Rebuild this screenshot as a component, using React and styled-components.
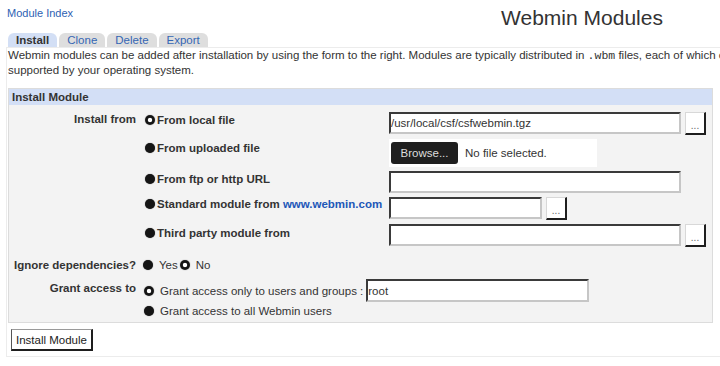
import React from 'react'
import styled, { createGlobalStyle } from 'styled-components'

const GlobalStyle = createGlobalStyle`
  html, body {
    margin: 0;
    padding: 0;
    overflow: hidden;
    background: #fff;
  }
  body {
    font-family: "Liberation Sans", Arial, sans-serif;
    font-size: 11.5px;
    color: #333;
  }
`

const Page = styled.div`
  width: 1152px;
  padding: 0 6px;
`

const Header = styled.div`
  display: grid;
  grid-template-columns: 15% 70% 15%;
  height: 33px;
`

const IndexLink = styled.a`
  align-self: start;
  padding: 6px 0 0 1px;
  font-size: 11px;
  line-height: 14px;
  color: #2d5fb3;
  text-decoration: none;
`

const Title = styled.h1`
  margin: 0;
  padding-top: 7px;
  font-size: 21px;
  line-height: 22px;
  font-weight: normal;
  text-align: center;
  color: #333;
`

const Tabs = styled.div`
  display: flex;
  gap: 2px;
  margin-left: 2px;
`

const Tab = styled.span`
  height: 14px;
  padding: 0 8px;
  border-radius: 6px 6px 0 0;
  line-height: 14px;
  font-weight: ${(p) => (p.$active ? 'bold' : 'normal')};
  color: ${(p) => (p.$active ? '#333' : '#3566b4')};
  background: ${(p) => (p.$active ? '#d3dff5' : '#dedede')};
`

const Panel = styled.div`
  border: 1px solid #ececec;
  padding: 0 1px 5px;
`

const Description = styled.p`
  margin: 0 0 11px;
  line-height: 14px;
`

const Mono = styled.code`
  font-family: "Liberation Mono", "Courier New", monospace;
  font-size: 11.5px;
`

const Box = styled.div`
  width: 705px;
  box-sizing: border-box;
  border: 1px solid #dcdcdc;
`

const BoxHead = styled.div`
  height: 16px;
  padding-left: 3px;
  line-height: 16px;
  font-weight: bold;
  background: #d3dff6;
`

const BoxBody = styled.div`
  padding: 7px 0 4px;
  background: #f3f3f3;
`

const Row = styled.div`
  display: grid;
  grid-template-columns: 134px 1fr;
  margin-top: ${(p) => p.$gap || 0}px;
`

const Label = styled.div`
  padding: ${(p) => p.$top || 0}px 7px 0 0;
  line-height: 14px;
  font-weight: bold;
  text-align: right;
`

const SourceGrid = styled.div`
  display: grid;
  grid-template-columns: 246px auto;
  row-gap: 4px;
`

const Choice = styled.div`
  display: flex;
  align-items: center;
  gap: 2px;
  padding: ${(p) => (p.$top ?? 1)}px 0 0 2px;
  height: 14px;
  line-height: 14px;
  font-weight: bold;
`

const Option = styled.span`
  display: inline-flex;
  align-items: center;
  gap: 6px;
  line-height: 14px;
`

const Options = styled.div`
  display: flex;
  align-items: center;
  gap: 2px;
`

const Stack = styled.div`
  display: flex;
  flex-direction: column;
  gap: 2px;
`

const Line = styled.div`
  display: flex;
  align-items: center;
  gap: 3px;
  padding-left: 1px;
`

const Radio = styled.span`
  flex: none;
  width: 10px;
  height: 10px;
  border-radius: 50%;
  background: ${(p) =>
    p.$checked
      ? 'radial-gradient(circle, #fff 0 1.8px, #151515 2.6px)'
      : '#151515'};
  box-shadow: 0 0 1px rgba(0, 0, 0, 0.6);
`

const WebLink = styled.a`
  color: #2157b8;
  text-decoration: none;
`

const InputCell = styled.div`
  display: flex;
  align-items: flex-start;
  gap: 4px;
`

const TextInput = styled.input`
  box-sizing: border-box;
  width: ${(p) => p.$width}px;
  height: ${(p) => p.$height || 22}px;
  margin: 0;
  padding: 0 1px 0 0;
  border-style: solid;
  border-width: 2px;
  border-color: #3a3a3a #c6c6c6 #c6c6c6 #3a3a3a;
  background: #fff;
  font-family: "Liberation Sans", Arial, sans-serif;
  font-size: 11.5px;
  color: #333;
  outline: none;
`

const DotsButton = styled.button`
  box-sizing: border-box;
  width: 21px;
  height: 23px;
  margin: 0;
  padding: 4px 0 0;
  border-style: solid;
  border-width: 1px 2px 2px 1px;
  border-color: #d8d8d8 #1e1e1e #1e1e1e #d8d8d8;
  background: #fff;
  font-family: "Liberation Sans", Arial, sans-serif;
  font-size: 10px;
  color: #666;
`

const BrowseBox = styled.div`
  display: flex;
  align-items: center;
  gap: 7px;
  width: 208px;
  height: 28px;
  padding-left: 2px;
  box-sizing: border-box;
  background: #fff;
`

const BrowseButton = styled.span`
  width: 67px;
  height: 22px;
  border-radius: 3px;
  background: #1f1f1f;
  color: #ddd;
  line-height: 22px;
  text-align: center;
`

const Actions = styled.div`
  margin: 6px 0 0 3px;
`

const SubmitButton = styled.button`
  box-sizing: border-box;
  width: 82px;
  height: 22px;
  margin: 0;
  padding: 0;
  border-style: solid;
  border-width: 1px 2px 2px 1px;
  border-color: #9a9a9a #1e1e1e #1e1e1e #555;
  background: #fff;
  font-family: "Liberation Sans", Arial, sans-serif;
  font-size: 11.5px;
  color: #222;
`

function App() {
  return (
    <Page>
      <GlobalStyle />
      <Header>
        <IndexLink href="#">Module Index</IndexLink>
        <Title>Webmin Modules</Title>
        <span />
      </Header>
      <Tabs>
        <Tab $active>Install</Tab>
        <Tab>Clone</Tab>
        <Tab>Delete</Tab>
        <Tab>Export</Tab>
      </Tabs>
      <Panel>
        <Description>
          Webmin modules can be added after installation by using the form to
          the right. Modules are typically distributed in <Mono>.wbm</Mono>{' '}
          files, each of which can contain one or more modules. Modules can also
          be installed from RPM files if
          <br />
          supported by your operating system.
        </Description>
        <Box>
          <BoxHead>Install Module</BoxHead>
          <BoxBody>
            <Row>
              <Label>Install from</Label>
              <SourceGrid>
                <Choice>
                  <Radio $checked />
                  From local file
                </Choice>
                <InputCell>
                  <TextInput $width={292} defaultValue="/usr/local/csf/csfwebmin.tgz" />
                  <DotsButton>...</DotsButton>
                </InputCell>

                <Choice $top={2}>
                  <Radio />
                  From uploaded file
                </Choice>
                <BrowseBox>
                  <BrowseButton>Browse...</BrowseButton>
                  <span>No file selected.</span>
                </BrowseBox>

                <Choice>
                  <Radio />
                  From ftp or http URL
                </Choice>
                <InputCell>
                  <TextInput $width={292} />
                </InputCell>

                <Choice $top={0}>
                  <Radio />
                  <span>
                    Standard module from <WebLink href="#">www.webmin.com</WebLink>
                  </span>
                </Choice>
                <InputCell>
                  <TextInput $width={153} />
                  <DotsButton>...</DotsButton>
                </InputCell>

                <Choice $top={2}>
                  <Radio />
                  Third party module from
                </Choice>
                <InputCell>
                  <TextInput $width={292} />
                  <DotsButton>...</DotsButton>
                </InputCell>
              </SourceGrid>
            </Row>

            <Row $gap={11}>
              <Label>Ignore dependencies?</Label>
              <Options>
                <Option>
                  <Radio />
                  Yes
                </Option>
                <Option>
                  <Radio $checked />
                  No
                </Option>
              </Options>
            </Row>

            <Row $gap={7}>
              <Label $top={2}>Grant access to</Label>
              <Stack>
                <Line>
                  <Option>
                    <Radio $checked />
                    Grant access only to users and groups :
                  </Option>
                  <TextInput $width={223} $height={23} defaultValue="root" />
                </Line>
                <Line>
                  <Option>
                    <Radio />
                    Grant access to all Webmin users
                  </Option>
                </Line>
              </Stack>
            </Row>
          </BoxBody>
        </Box>
        <Actions>
          <SubmitButton>Install Module</SubmitButton>
        </Actions>
      </Panel>
    </Page>
  )
}

export default App
